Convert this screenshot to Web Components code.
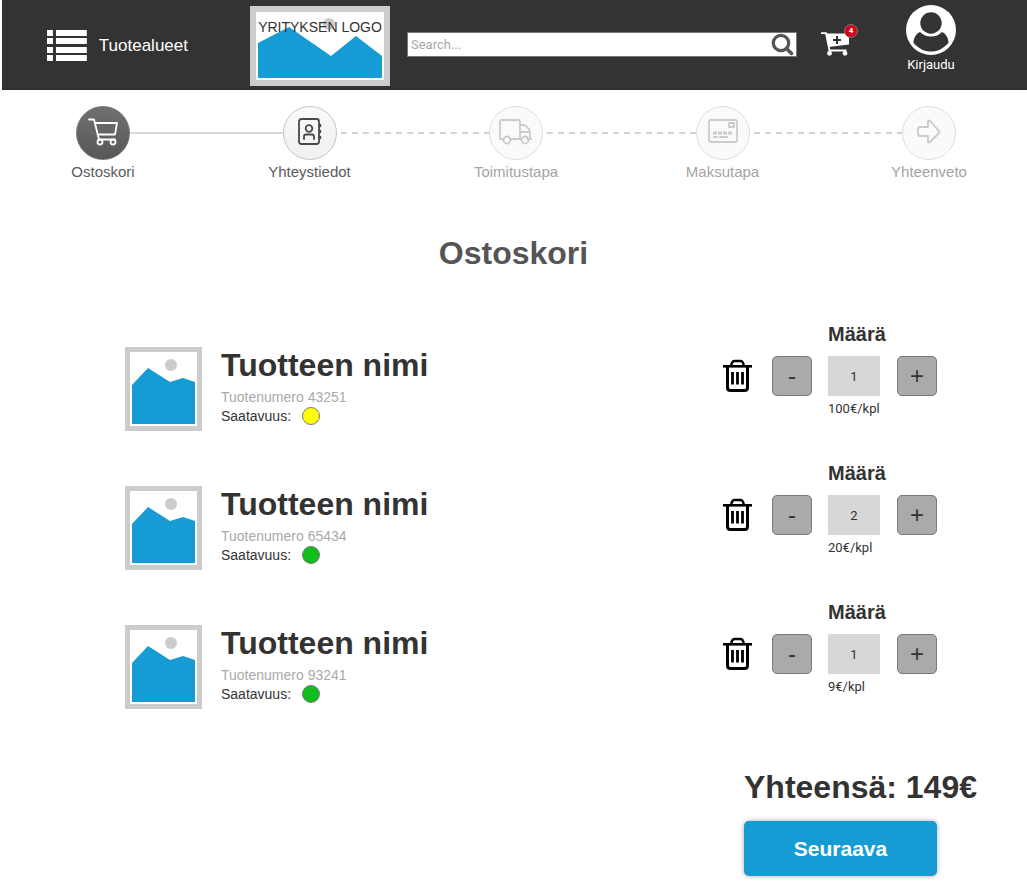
<!DOCTYPE html>
<html lang="fi">
<head>
<meta charset="utf-8">
<meta name="viewport" content="width=device-width, initial-scale=1">
<title>Ostoskori</title>
<style>
  body { margin: 0; background: #fff; color: #333; font-family: "Liberation Sans", Arial, sans-serif; }
</style>
</head>
<body>
<shop-page></shop-page>
<script>
const define = (name, html, setup) => {
  const template = document.createElement('template');
  template.innerHTML = '<style>*{box-sizing:border-box}svg{display:block}</style>' + html;
  customElements.define(name, class extends HTMLElement {
    constructor() {
      super();
      this.attachShadow({ mode: 'open' }).append(template.content.cloneNode(true));
    }
    connectedCallback() { if (setup) setup(this, this.shadowRoot); }
  });
};

define('shop-header', `
<style>
  :host { display: block; margin-left: 2px; background: #333; color: #fff; }
  header { display: flex; align-items: center; height: 90px; padding: 2px 71px 0 45px; box-shadow: inset 0 -1px #2b2b2b; }
  a { color: inherit; text-decoration: none; }
  .menu { display: flex; align-items: center; gap: 12px; width: 141px; margin-right: 62px; padding: 0; border: 0; background: none; color: inherit; font: 17px/20px "Liberation Sans", sans-serif; white-space: nowrap; }
  .logo { display: grid; flex: none; width: 140px; height: 80px; margin-right: 17px; padding: 6px 6px; background: #ccc; color: #333; font-size: 14px; line-height: 16px; }
  .logo > * { grid-area: 1 / 1; }
  .logo span { justify-self: center; align-self: start; padding-top: 7px; white-space: nowrap; }
  form { display: flex; align-items: center; flex: 1; min-width: 0; height: 25px; margin: 0 24px 4px 0; border: 1px solid #797979; background: #fff; }
  input { flex: 1; min-width: 0; height: 23px; padding: 0 3px; border: 0; background: none; font: 13px/16px Roboto, sans-serif; color: #333; outline: 0; }
  input::placeholder { color: #a9a9a9; opacity: 1; }
  form button { flex: none; margin-right: 2px; padding: 0; border: 0; background: none; }
  .cart { position: relative; flex: none; width: 37px; margin: 0 48px 4px 0; }
  .badge { position: absolute; top: -8px; right: 0; width: 14px; height: 14px; border: 1px solid #797979; border-radius: 50%; background: #d9001b; font: bold 8px/12px Roboto, sans-serif; text-align: center; }
  .login { display: flex; flex-direction: column; align-items: center; gap: 1px; flex: none; width: 50px; margin-bottom: 13px; font: 13px/18px Roboto, sans-serif; }
</style>
<header>
  <button class="menu" type="button">
    <svg width="40" height="32" viewBox="0 0 40 32" fill="#fff"><path d="M0 0h6v6H0zM9 0h31v6H9zM0 8h6v6H0zM9 8h31v6H9zM0 17h6v6H0zM9 17h31v6H9zM0 25h6v6H0zM9 25h31v6H9z"/></svg>
    <span>Tuotealueet</span>
  </button>
  <a class="logo" href="#">
    <svg width="128" height="68" viewBox="0 0 128 68"><path fill="#fff" d="M0 0h128v68H0z"/><circle cx="73" cy="12" r="6" fill="#ccc"/><path fill="#169bd5" d="M2 31L33 15 75 44 100 24l26 20v22H2z"/></svg>
    <span>YRITYKSEN LOGO</span>
  </a>
  <form role="search">
    <input type="search" aria-label="Haku" placeholder="Search...">
    <button type="button" aria-label="Hae"><svg width="23" height="23" viewBox="0 0 23 23" fill="none" stroke="#555"><circle cx="10" cy="10" r="7.7" stroke-width="3.2"/><path d="M15.5 15.5l5 5" stroke-width="3.6" stroke-linecap="round"/></svg></button>
  </form>
  <a class="cart" href="#" aria-label="Ostoskori">
    <svg width="28" height="24" viewBox="0 0 28 24"><path d="M0 1.200h5l3.500 17.300h17" fill="none" stroke="#fff" stroke-width="1.800"/><path fill="#fff" d="M5.500 1.500H28v11L7.700 15z"/><path stroke="#333" stroke-width="2" d="M12 8h8M16 4v8"/><circle cx="8.500" cy="21.300" r="2.400" fill="#fff"/><circle cx="24" cy="21.300" r="2.400" fill="#fff"/></svg>
    <span class="badge">4</span>
  </a>
  <a class="login" href="#">
    <svg width="50" height="50" viewBox="0 0 50 50"><circle cx="25" cy="25" r="25" fill="#fff"/><circle cx="25" cy="18" r="10.7" fill="#333"/><path fill="#333" d="M14 27c3 3 6.500 4.500 11 4.500S33 30 36 27c4 2 6.500 6 6.500 11C37 44 31.500 46.500 25 46.500S13 44 7.500 38C7.500 33 10 29 14 27z"/></svg>
    <span>Kirjaudu</span>
  </a>
</header>`);

define('checkout-step', `
<style>
  :host { display: flex; flex-direction: column; align-items: center; flex: none; width: 54px; color: #a3a3a3; }
  .dot { display: grid; place-items: center; width: 54px; height: 54px; border: 1px solid #dedede; border-radius: 50%; background: #fafafa; color: #cbcbcb; }
  .label { margin-top: 2px; font-size: 15px; line-height: 20px; white-space: nowrap; }
  :host([state="next"]) { color: #5c5c5c; }
  :host([state="next"]) .dot { border-color: #c4c4c4; background: linear-gradient(#fafafa, #f0f0f0); color: #484848; }
  :host([state="current"]) { color: #5c5c5c; }
  :host([state="current"]) .dot { border-color: #777; background: linear-gradient(#707070, #585858); color: #fff; }
</style>
<span class="dot"><slot name="icon"></slot></span>
<span class="label"><slot></slot></span>`);

define('checkout-steps', `
<style>
  :host { display: block; }
  nav { display: flex; padding: 16px 71px 0 76px; }
  i { flex: 1; height: 2px; margin-top: 26px; background: #d9d9d9; }
  i.dash { background: repeating-linear-gradient(90deg, transparent 0 4px, #d2d2d2 4px 10px, transparent 10px 11px); }
  svg { padding-bottom: 2px; box-sizing: content-box; fill: none; stroke: currentColor; stroke-width: 1.8; stroke-linejoin: round; stroke-linecap: round; }
</style>
<nav aria-label="Tilauksen vaiheet">
  <checkout-step state="current"><svg slot="icon" width="30" height="28" viewBox="0 0 30 28"><path d="M1 1.500h5l5 20h16M7.500 5H29l-2 11.500H10"/><circle cx="12" cy="24" r="2.500"/><circle cx="25" cy="24" r="2.500"/></svg>Ostoskori</checkout-step>
  <i></i>
  <checkout-step state="next"><svg slot="icon" width="26" height="28" viewBox="0 0 26 28"><rect x="2" y="1" width="20" height="25" rx="2.500"/><circle cx="12" cy="10.500" r="3.300"/><path d="M7 21v-2.500q0-2 2-2h6q2 0 2 2V21"/><path stroke-width="2.500" d="M23 7v1M23 13v1M23 19v1"/></svg>Yhteystiedot</checkout-step>
  <i class="dash"></i>
  <checkout-step><svg slot="icon" width="34" height="28" viewBox="0 0 34 28"><path d="M5 21H2q-1 0-1-1V4q0-2 2-2h16q2 0 2 2v17H11M21 7h4q6 3 6 8v6h1M21 14h10M21 21h2M28 21h4"/><circle cx="8" cy="22" r="3.500"/><circle cx="26" cy="22" r="3.500"/></svg>Toimitustapa</checkout-step>
  <i class="dash"></i>
  <checkout-step><svg slot="icon" width="30" height="26" viewBox="0 0 30 26"><rect x="1" y="1" width="28" height="22" rx="2"/><rect x="21" y="4" width="5" height="4"/><path stroke-width="3" stroke-linecap="butt" stroke-dasharray="4 1" d="M5 14h20"/><path d="M6 18h3M12 18h7"/></svg>Maksutapa</checkout-step>
  <i class="dash"></i>
  <checkout-step><svg slot="icon" width="24" height="26" viewBox="0 0 24 26"><path d="M3 8h8V2q1-1 2 0l9 10q1 1 0 2l-9 9q-1 1-2 0v-6H3q-2 0-2-2v-5q0-2 2-2z"/></svg>Yhteenveto</checkout-step>
</nav>`);

define('cart-item', `
<style>
  :host { display: flex; justify-content: space-between; min-height: 139px; --stock: #0fbd1c; }
  :host([stock="low"]) { --stock: #ff0; }
  .info { display: flex; align-items: flex-start; gap: 19px; padding-top: 27px; }
  .info > svg { flex: none; }
  h2 { margin: 0; font-size: 32px; line-height: 36px; }
  p { margin: 0; font-size: 14px; line-height: 16px; }
  .number { margin: 6px 0 2px; color: #a9a9a9; }
  .stock { display: flex; align-items: center; gap: 11px; height: 18px; }
  .stock i { width: 18px; height: 18px; border: 1px solid #797979; border-radius: 50%; background: var(--stock); }
  .amount { display: grid; grid-template-columns: 33px 40px 53px 40px; column-gap: 16px; align-items: center; justify-items: start; align-content: start; grid-template-rows: 28px 40px 18px; row-gap: 8px; }
  label { grid-column: 3; font-size: 20px; font-weight: bold; line-height: 28px; }
  button { width: 40px; height: 40px; padding: 0; border: 1px solid #797979; border-radius: 5px; background: #aaa; color: #333; font: 24px/36px "Liberation Sans", sans-serif; }
  button.remove { grid-column: 1; height: 34px; width: 29px; border: 0; background: none; }
  input { width: 52px; height: 40px; padding: 0; border: 0; border-radius: 0; background: #d7d7d7; color: #333; font: 13px/18px Roboto, sans-serif; text-align: center; }
  .price { grid-column: 3; align-self: start; margin-top: -4px; font-family: Roboto, sans-serif; font-size: 13px; line-height: 18px; white-space: nowrap; }
</style>
<div class="info">
  <svg width="77" height="84" viewBox="0 0 77 84"><path fill="#ccc" d="M0 0h77v84H0z"/><path fill="#fff" d="M5 5h67v74H5z"/><circle cx="46" cy="18" r="6" fill="#ccc"/><path fill="#169bd5" d="M7 38L23 21l22 14 13-4 12 4v42H7z"/></svg>
  <div>
    <h2><slot></slot></h2>
    <p class="number"></p>
    <p class="stock">Saatavuus: <i></i></p>
  </div>
</div>
<div class="amount">
  <label for="qty">Määrä</label>
  <button class="remove" type="button" aria-label="Poista"><svg width="29" height="34" viewBox="0 0 29 34" fill="none" stroke="#000"><path stroke-width="2.600" d="M0 7.300h29"/><path stroke-width="2.400" d="M8.500 7V5q1-3 3-3h6q2 0 3 3v2"/><path stroke-width="3" d="M4.500 8v20.500q0 3 3 3h14q3 0 3-3V8"/><path stroke-width="2.800" d="M9.500 13v12.500M14.500 13v12.500M19.500 13v12.500"/></svg></button>
  <button type="button" aria-label="Vähennä">-</button>
  <input id="qty" type="text" inputmode="numeric">
  <button type="button" aria-label="Lisää">+</button>
  <span class="price"></span>
</div>`, (host, root) => {
  root.querySelector('.number').textContent = 'Tuotenumero ' + host.getAttribute('number');
  root.querySelector('.price').textContent = host.getAttribute('price') + '/kpl';
  const input = root.querySelector('input');
  input.value = host.getAttribute('quantity');
  const [minus, plus] = root.querySelectorAll('.amount button:not(.remove)');
  minus.onclick = () => { input.value = Math.max(1, input.value - 1); };
  plus.onclick = () => { input.value = Number(input.value) + 1; };
  root.querySelector('.remove').onclick = () => host.remove();
});

define('cart-summary', `
<style>
  :host { display: flex; flex-direction: column; align-items: flex-start; width: fit-content; margin: 32px 50px 16px auto; }
  p { margin: 0; font-size: 32px; font-weight: bold; line-height: 36px; white-space: nowrap; }
  button { width: 193px; height: 55px; margin-top: 16px; padding: 0; border: 0; border-radius: 5px; background: #169bd5; box-shadow: 0 0 5px rgba(0, 0, 0, .35); color: #fff; font: bold 21px/24px "Liberation Sans", sans-serif; }
</style>
<p>Yhteensä: <slot></slot></p>
<button type="button">Seuraava</button>`);

define('shop-page', `
<style>
  :host { display: block; }
  h1 { margin: 53px 0 49px; color: #555; font-size: 32px; line-height: 36px; text-align: center; }
  section { padding: 0 90px 0 125px; }
</style>
<shop-header></shop-header>
<main>
  <checkout-steps></checkout-steps>
  <h1>Ostoskori</h1>
  <section aria-label="Tuotteet">
    <cart-item number="43251" quantity="1" price="100€" stock="low">Tuotteen nimi</cart-item>
    <cart-item number="65434" quantity="2" price="20€">Tuotteen nimi</cart-item>
    <cart-item number="93241" quantity="1" price="9€">Tuotteen nimi</cart-item>
  </section>
  <cart-summary>149€</cart-summary>
</main>`);
</script>
</body>
</html>
